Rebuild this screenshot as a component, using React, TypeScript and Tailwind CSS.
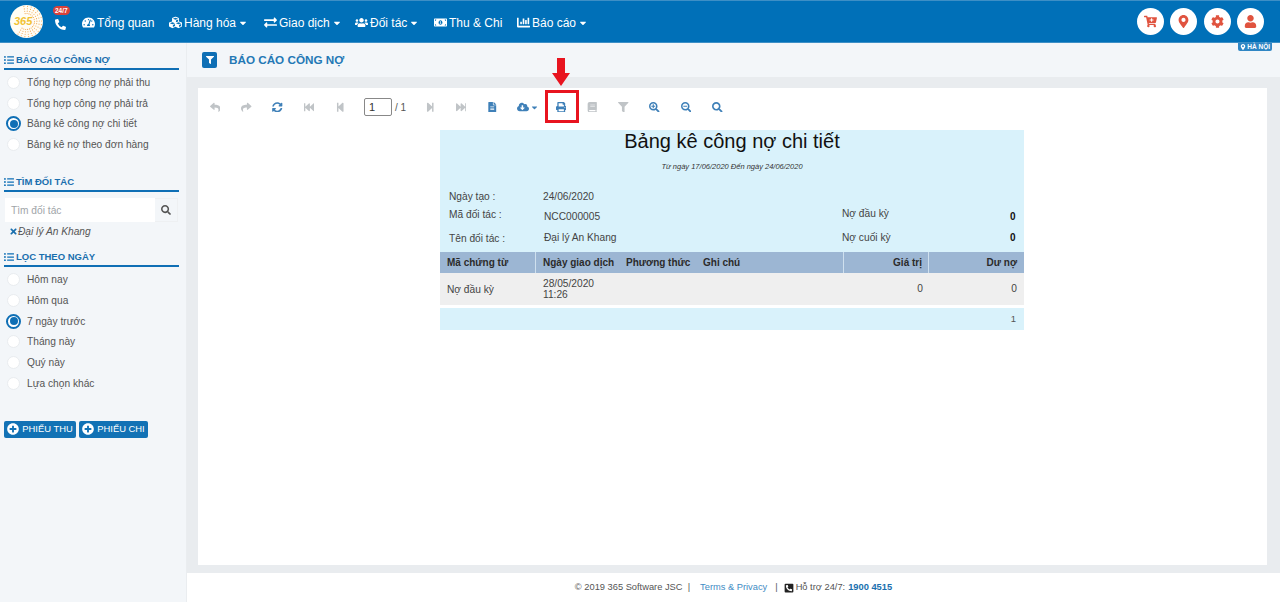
import React from 'react';
import {
  FaBook, FaCaretDown, FaCartPlus, FaChartBar, FaCloudDownloadAlt, FaCog, FaCubes, FaExchangeAlt, FaFastBackward,
  FaFastForward, FaFileAlt, FaFilter, FaListUl, FaMapMarkerAlt, FaMoneyBillAlt, FaPhoneAlt, FaPhoneSquareAlt,
  FaPlusCircle, FaPrint, FaReply, FaSearch, FaSearchMinus, FaSearchPlus, FaShare, FaStepBackward, FaStepForward,
  FaSyncAlt, FaTachometerAlt, FaTimes, FaUser, FaUsers,
} from 'react-icons/fa';

const nav = [
  { label: 'Tổng quan', icon: FaTachometerAlt, caret: false, w: 'w-[87px]' },
  { label: 'Hàng hóa', icon: FaCubes, caret: true, w: 'w-[95px]' },
  { label: 'Giao dịch', icon: FaExchangeAlt, caret: true, w: 'w-[91px]' },
  { label: 'Đối tác', icon: FaUsers, caret: true, w: 'w-[79px]' },
  { label: 'Thu & Chi', icon: FaMoneyBillAlt, caret: false, w: 'w-[83px]' },
  { label: 'Báo cáo', icon: FaChartBar, caret: true, w: 'w-[72px]' },
];

// dotted sunburst on the right of the logo
const logoDots: { x: number; y: number; r: number }[] = [];
for (let ring = 0; ring < 4; ring++) {
  for (let a = -100; a <= 130; a += 14) {
    const rad = (a * Math.PI) / 180;
    const dist = 8 + ring * 2.4;
    logoDots.push({ x: 16.5 + Math.cos(rad) * dist, y: 16.5 + Math.sin(rad) * dist, r: 0.55 });
  }
}

function Logo() {
  return (
    <div className="relative w-[33px] h-[33px] rounded-full bg-[#fffdf5] shrink-0">
      <svg className="absolute inset-0" width="33" height="33" viewBox="0 0 33 33">
        {logoDots.map((d, i) => (
          <circle key={i} cx={d.x} cy={d.y} r={d.r} fill="#f2a44a" />
        ))}
      </svg>
      <span className="relative flex h-full items-center pl-[4px] text-[11px] font-bold italic text-[#f1c232]">365</span>
    </div>
  );
}

function Radio({ label, checked }: { label: string; checked?: boolean }) {
  return (
    <div className="flex items-center h-[20.8px] text-[10.2px] text-[#555]">
      {checked ? (
        <span className="ml-[6px] mr-[6px] w-[15px] h-[15px] rounded-full border-2 border-[#0f6fb5] bg-white flex items-center justify-center">
          <span className="w-[8px] h-[8px] rounded-full bg-[#0f6fb5]" />
        </span>
      ) : (
        <span className="ml-[7px] mr-[7px] w-[13px] h-[13px] rounded-full border border-[#e9ecef] bg-white" />
      )}
      <span>{label}</span>
    </div>
  );
}

function SectionTitle({ label }: { label: string }) {
  return (
    <div className="ml-[4px] w-[175px] h-[16px] flex items-center gap-[2px] border-b-[2px] border-[#0f6fb5] text-[9.5px] font-bold text-[#1a6fae] leading-none pb-[2px]">
      <FaListUl className="text-[10px] text-[#0f6fb5]" />
      <span>{label}</span>
    </div>
  );
}

function Tool({ icon: Icon, on }: { icon: any; on?: boolean }) {
  return (
    <span className={`w-[31.3px] shrink-0 flex justify-center text-[10.5px] ${on ? 'text-[#3f80b8]' : 'text-[#c0c4c7]'}`}>
      <Icon />
    </span>
  );
}

export default function App() {
  return (
    <div className="w-[1280px] h-[602px] overflow-hidden flex flex-col bg-white font-['Liberation_Sans',Arial,sans-serif]">
      <header className="h-[43px] shrink-0 bg-[#0070b8] border-t border-[#3d8fc6] border-b border-b-[#3d8fc6] flex items-center pl-[10px] pr-[16px]">
        <Logo />
        <div className="relative w-[39px] pl-[12px] pt-[5px] text-white text-[11px]">
          <FaPhoneAlt />
          <span className="absolute left-[10px] -top-[8px] h-[9px] px-[2px] rounded-full bg-[#d9413a] text-white text-[6.5px] font-bold leading-[9px]">24/7</span>
        </div>
        <nav className="flex items-center pt-[2px] text-white text-[12px] whitespace-nowrap">
          {nav.map((item) => (
            <div key={item.label} className={`flex items-center gap-[2px] ${item.w}`}>
              <item.icon className="text-[13px] shrink-0" />
              <span>{item.label}</span>
              {item.caret && <FaCaretDown className="text-[10px]" />}
            </div>
          ))}
        </nav>
        <div className="ml-auto flex items-center gap-[6.5px]">
          {[FaCartPlus, FaMapMarkerAlt, FaCog, FaUser].map((Icon, i) => (
            <span key={i} className="w-[27px] h-[27px] rounded-full bg-white flex items-center justify-center text-[13px] text-[#e0533f]">
              <Icon />
            </span>
          ))}
        </div>
      </header>

      <div className="flex-1 flex min-h-0 relative">
        <span className="absolute right-[8px] top-0 h-[8px] px-[2px] flex items-center gap-[1px] bg-[#2f86c4] text-white text-[6.5px] font-bold rounded-b-[2px]">
          <FaMapMarkerAlt className="text-[6px]" />
          HÀ NỘI
        </span>

        <aside className="w-[187px] shrink-0 bg-[#f3f6f9] border-r-[1px] border-[#eaedf0] pt-[11px]">
          <SectionTitle label="BÁO CÁO CÔNG NỢ" />
          <div className="mt-[2px]">
            <Radio label="Tổng hợp công nợ phải thu" />
            <Radio label="Tổng hợp công nợ phải trả" />
            <Radio label="Bảng kê công nợ chi tiết" checked />
            <Radio label="Bảng kê nợ theo đơn hàng" />
          </div>
          <div className="mt-[21px]"><SectionTitle label="TÌM ĐỐI TÁC" /></div>
          <div className="ml-[5px] mt-[6px] w-[173px] h-[24px] flex">
            <div className="w-[150px] bg-white text-[10.2px] text-[#a0a4a8] flex items-center pl-[6px]">Tìm đối tác</div>
            <div className="flex-1 flex items-center justify-center text-[10px] text-[#555] border border-l-0 border-[#eef0f2]"><FaSearch /></div>
          </div>
          <div className="ml-[9px] mt-[2px] h-[14px] flex items-center text-[10.2px] italic text-[#555]">
            <FaTimes className="text-[9px] text-[#1a6fae]" />
            <span>Đại lý An Khang</span>
          </div>
          <div className="mt-[13px]"><SectionTitle label="LỌC THEO NGÀY" /></div>
          <div className="mt-[2px]">
            <Radio label="Hôm nay" />
            <Radio label="Hôm qua" />
            <Radio label="7 ngày trước" checked />
            <Radio label="Tháng này" />
            <Radio label="Quý này" />
            <Radio label="Lựa chọn khác" />
          </div>
          <div className="ml-[4px] mt-[27px] flex gap-[3px]">
            {['PHIẾU THU', 'PHIẾU CHI'].map((t, i) => (
              <span key={t} className={`h-[17px] ${i === 0 ? 'w-[72px]' : 'w-[69px]'} rounded-[2px] bg-[#1272b5] text-white text-[9.4px] flex items-center justify-center gap-[3px]`}>
                <FaPlusCircle className="text-[12px]" />
                {t}
              </span>
            ))}
          </div>
        </aside>

        <main className="flex-1 min-w-0 flex flex-col bg-[#e9ecef]">
          <div className="h-[34px] shrink-0 bg-[#f3f6f9] flex items-center pl-[15px]">
            <span className="w-[15px] h-[16px] rounded-[2px] bg-[#0f6fb5] flex items-center justify-center text-white text-[8px]"><FaFilter /></span>
            <span className="ml-[12px] text-[11.7px] font-bold text-[#2478b5]">BÁO CÁO CÔNG NỢ</span>
          </div>
          <div className="flex-1 min-h-0 mt-[11px] ml-[11px] mr-[13px] mb-[8px] bg-white">
            <div className="relative h-[38px] mb-[4px] flex items-center pl-[1.5px]">
              <Tool icon={FaReply} />
              <Tool icon={FaShare} />
              <Tool icon={FaSyncAlt} on />
              <Tool icon={FaFastBackward} />
              <Tool icon={FaStepBackward} />
              <span className="ml-[8px] shrink-0 w-[28px] h-[18px] border border-[#888] rounded-[2px] text-[11px] text-[#333] flex items-center pl-[4px]">1</span>
              <span className="ml-[3px] w-[19.3px] shrink-0 text-[10px] text-[#555]">/ 1</span>
              <Tool icon={FaStepForward} />
              <Tool icon={FaFastForward} />
              <Tool icon={FaFileAlt} on />
              <span className="ml-[9px] w-[28px] shrink-0 flex items-center gap-[1px] text-[#3f80b8]"><FaCloudDownloadAlt className="text-[12px]" /><FaCaretDown className="text-[9px]" /></span>
              <Tool icon={FaPrint} on />
              <span className="absolute left-[347px] top-[2px] w-[34px] h-[33px] border-[3px] border-[#e8141f]" />
              <svg className="absolute left-[354px] -top-[30px]" width="18" height="28" viewBox="0 0 18 28"><path d="M5 0h8v15h5L9 28 0 15h5z" fill="#e8141f" /></svg>
              <Tool icon={FaBook} />
              <Tool icon={FaFilter} />
              <Tool icon={FaSearchPlus} on />
              <Tool icon={FaSearchMinus} on />
              <Tool icon={FaSearch} on />
            </div>

            <div className="ml-[242px] w-[584px] text-[#333]">
              <div className="h-[122px] bg-[#d9f2fb] flex flex-col">
                <div className="h-[22px] flex items-center justify-center text-[20px] text-[#111]">Bảng kê công nợ chi tiết</div>
                <div className="mt-[10px] h-[10px] leading-[10px] text-center text-[7.5px] italic text-[#333]">Từ ngày 17/06/2020 Đến ngày 24/06/2020</div>
                <div className="relative mt-[15px] pl-[9px] text-[10.2px] text-[#444]">
                  <div className="h-[19px] flex items-center"><span className="w-[94px]">Ngày tạo :</span><span>24/06/2020</span></div>
                  <div className="h-[21px] flex items-center">
                    <span className="w-[95px] -mt-[3px]">Mã đối tác :</span>
                    <span className="w-[298px]">NCC000005</span>
                    <span className="-mt-[5px] w-[168px]">Nợ đầu kỳ</span>
                    <b className="text-[#111] text-[10px]">0</b>
                  </div>
                  <div className="h-[21px] flex items-center">
                    <span className="w-[95px] mt-[2px]">Tên đối tác :</span>
                    <span className="w-[298px]">Đại lý An Khang</span>
                    <span className="w-[168px]">Nợ cuối kỳ</span>
                    <b className="text-[#111] text-[10px]">0</b>
                  </div>
                </div>
              </div>
              <div className="h-[21px] bg-[#9cb6d3] flex items-center text-[10px] font-bold text-[#2b2b2b]">
                <span className="w-[96px] h-full flex items-center pl-[7px] border-r border-[#cfe0ee]">Mã chứng từ</span>
                <span className="w-[90px] pl-[7px]">Ngày giao dịch</span>
                <span className="w-[77px]">Phương thức</span>
                <span className="w-[140px]">Ghi chú</span>
                <span className="w-[86px] h-full flex items-center justify-end pr-[6px] border-x border-[#cfe0ee]">Giá trị</span>
                <span className="flex-1 text-right pr-[7px]">Dư nợ</span>
              </div>
              <div className="h-[32px] bg-[#efefef] flex items-center text-[10.2px] text-[#444]">
                <span className="w-[95px] pl-[7px] pt-[2px]">Nợ đầu kỳ</span>
                <span className="w-[308px] pl-[8px] leading-[11.5px]">28/05/2020<br />11:26</span>
                <span className="w-[80px] text-right">0</span>
                <span className="flex-1 text-right pr-[7px]">0</span>
              </div>
              <div className="mt-[3px] h-[22px] bg-[#d9f2fb] flex items-center justify-end pr-[8px] text-[9.5px] text-[#555]">1</div>
            </div>
          </div>
          <footer className="h-[29px] shrink-0 bg-white flex items-center justify-center pt-[1px] text-[9.3px] text-[#555] whitespace-nowrap">
            <span>© 2019 365 Software JSC&nbsp; |</span>
            <span className="ml-[10px] text-[#3f8cc4]">Terms &amp; Privacy</span>
            <span className="ml-[8px]">|</span>
            <FaPhoneSquareAlt className="ml-[6px] text-[10px] text-[#222]" />
            <span className="ml-[2px]">Hỗ trợ 24/7:</span>
            <b className="ml-[3px] text-[#1a6fae]">1900 4515</b>
          </footer>
        </main>
      </div>
    </div>
  );
}
